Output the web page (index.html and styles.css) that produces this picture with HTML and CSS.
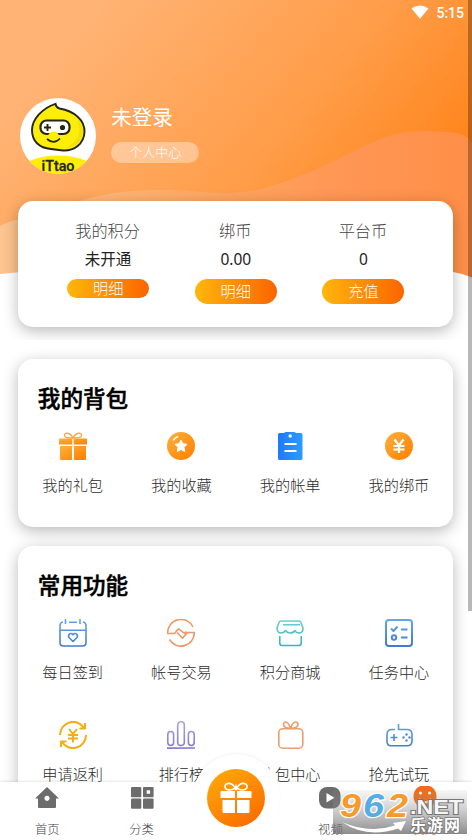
FILE: index.html
```html
<!DOCTYPE html>
<html lang="zh-CN">
<head>
<meta charset="utf-8">
<title>个人中心</title>
<link rel="stylesheet" href="styles.css">
</head>
<body>
<svg class="defs" aria-hidden="true">
  <defs>
    <linearGradient id="or" x1="0" y1="0" x2="1" y2="1"><stop offset="0" stop-color="#ffb13c"/><stop offset="1" stop-color="#ff7d00"/></linearGradient>
    <linearGradient id="bl" x1="0" y1="0" x2="1" y2="0"><stop offset="0" stop-color="#1f79ff"/><stop offset="1" stop-color="#2b9dff"/></linearGradient>
    <linearGradient id="lb" x1="0" y1="0" x2="0" y2="28" gradientUnits="userSpaceOnUse"><stop offset="0" stop-color="#65a7ea"/><stop offset="1" stop-color="#4278d0"/></linearGradient>
    <linearGradient id="te" x1="0" y1="0" x2="0" y2="28" gradientUnits="userSpaceOnUse"><stop offset="0" stop-color="#6dd0d6"/><stop offset="1" stop-color="#36b2b9"/></linearGradient>
    <linearGradient id="pu" x1="0" y1="0" x2="0" y2="28" gradientUnits="userSpaceOnUse"><stop offset="0" stop-color="#aaa4e8"/><stop offset="1" stop-color="#8178d4"/></linearGradient>
    <linearGradient id="wave" x1="0" y1="0" x2="1" y2="0"><stop offset="0" stop-color="#fdc591"/><stop offset=".35" stop-color="#ffad69"/><stop offset=".7" stop-color="#ff9755"/><stop offset="1" stop-color="#ff8f48"/></linearGradient>
  </defs>
</svg>
<div class="app">
  <header class="hero">
    <svg class="waves" viewBox="0 0 472 340">
      <path fill="url(#wave)" d="M0 226Q9 221 20 219C50 212 65 206 80 201C115 189 160 189 190 191C245 196 260 192 310 172C350 156 378 134 412 131.500Q430 130.500 448 132Q466 133 472 143V280H0Z"/>
      <path fill="#fff" d="M0 274Q236 250 453 272Q463 273.500 472 277.500V340H0Z"/>
    </svg>
    <div class="status">
      <svg width="18" height="14" viewBox="0 0 18 14"><path fill="#fff" d="M.5 3.500Q9-2.500 17.500 3.500L9 13.800Z"/></svg>
      <span>5:15</span>
    </div>
    <div class="profile">
      <svg class="avatar" viewBox="0 0 76 76">
        <defs><clipPath id="av"><circle cx="38" cy="38" r="38"/></clipPath></defs>
        <circle cx="38" cy="38" r="38" fill="#fff"/>
        <g clip-path="url(#av)">
          <ellipse cx="38" cy="77" rx="41" ry="19.500" fill="#fcee08"/>
          <path d="M35.500 5.800Q36 9.500 39.500 10.500C54 13 65 22 64.500 34C64 46 54 53 43 52.500Q37 51.800 31 51C19 50 12 43 12 32C12 22 22 10 35.500 5.800Z" fill="#fcee08" stroke="#27250d" stroke-width="1.900"/>
          <path d="M57 22Q65 40 46 50Q60 49 63 35Q63 26 57 22Z" fill="#f3df0b"/>
          <rect x="20.500" y="22.500" width="29" height="13.500" rx="6" fill="#fff" stroke="#27250d" stroke-width="2.200"/>
          <path d="M28 38Q29 33.500 34 33.500Q38 33.500 39 38Z" fill="#fcee08"/>
          <path d="M24 29.500h7M27.500 26v7" stroke="#27250d" stroke-width="1.900"/><circle cx="42.500" cy="29.500" r="2.600" fill="#27250d"/>
          <path d="M27 41Q34 47 40 40.500" fill="none" stroke="#27250d" stroke-width="1.700"/>
          <text class="brand" x="21.500" y="72.500" textLength="33" lengthAdjust="spacingAndGlyphs">iTtao</text>
        </g>
      </svg>
      <div class="who"><div class="name">未登录</div><div class="tag">个人中心</div></div>
    </div>
    <section class="card stats">
      <div class="stat"><div class="stat-title">我的积分</div><div class="stat-value">未开通</div><div class="btn short">明细</div></div>
      <div class="stat"><div class="stat-title">绑币</div><div class="stat-value">0.00</div><div class="btn">明细</div></div>
      <div class="stat"><div class="stat-title">平台币</div><div class="stat-value">0</div><div class="btn">充值</div></div>
    </section>
  </header>

  <section class="card bag">
    <h2>我的背包</h2>
    <div class="grid">
      <div class="item">
        <svg class="icon" viewBox="0 0 28 28"><g fill="url(#or)"><path d="M1 6.500H27Q28 6.500 28 7.500V12.500H15V6.500H13V12.500H0V7.500Q0 6.500 1 6.500Z"/><path d="M1 14H13V28H2Q1 28 1 27ZM15 14H27V27Q27 28 26 28H15Z"/></g><rect x="13" y="6.500" width="2" height="6" fill="#ffe2b5"/><path d="M14 6C11 0 5 0 5.500 4Q6 6 14 6Q22 6 22.500 4C23 0 17 0 14 6" fill="none" stroke="#ffa53a" stroke-width="1.300"/></svg>
        <span>我的礼包</span></div>
      <div class="item">
        <svg class="icon" viewBox="0 0 28 28"><circle cx="14" cy="14" r="14" fill="url(#or)"/><path d="M14 8l1.800 3.700 4.200.6-3 3 .7 4.200-3.700-2-3.700 2 .7-4.200-3-3 4.200-.6Z" fill="#fff" stroke="#fff" stroke-linejoin="round"/><path d="M6.500 8Q8 6 10.500 4.700" stroke="#fff" stroke-width="1.500" stroke-linecap="round" fill="none"/></svg>
        <span>我的收藏</span></div>
      <div class="item">
        <svg class="icon" viewBox="0 0 28 28"><path fill="url(#bl)" d="M3.500 1H8Q9 0 10 0H18Q19 0 20 1H25Q26.500 1 26.500 2.500V26.500Q26.500 28 25 28H3.500Q2 28 2 26.500V2.500Q2 1 3.500 1Z"/><circle cx="14.200" cy="4" r="1.700" fill="#fff"/><path d="M8.500 12h12M8.500 19h12" stroke="#fff" stroke-width="2.200"/></svg>
        <span>我的帐单</span></div>
      <div class="item">
        <svg class="icon" viewBox="0 0 28 28"><circle cx="14" cy="14" r="14" fill="url(#or)"/><path d="M9.500 7.500L14 13.500L18.500 7.500M8.500 14H19.500M8.500 17.500H19.500M14 13.500V21" fill="none" stroke="#fff" stroke-width="2.200"/></svg>
        <span>我的绑币</span></div>
    </div>
  </section>

  <section class="card tools">
    <h2>常用功能</h2>
    <div class="grid">
      <div class="item">
        <svg class="icon line" viewBox="0 0 28 28" stroke="url(#lb)"><path d="M4 3Q1 3.500 1 6.500V23.500Q1 27 4.500 27H23.500Q27 27 27 23.500V6.500Q27 3.500 24 3M10 3.300H18M6.500 0V5M21 0V5M1 11.200H27"/><path d="M14 22.500L10 18.500C8.500 16 12 12.500 14 15.800C16 12.500 19.500 16 18 18.500Z"/></svg>
        <span>每日签到</span></div>
      <div class="item">
        <svg class="icon line" viewBox="0 0 28 28" stroke="#ec9965"><path d="M26 8A13.300 13.300 0 0 0 .7 14.500H7.500L11.500 9.800L17.500 14.300L19.500 12.500M2.500 20.500A13.300 13.300 0 0 0 27.300 13.500H20.500L15.500 19.200L10 13.500"/></svg>
        <span>帐号交易</span></div>
      <div class="item">
        <svg class="icon line" viewBox="0 0 28 28" stroke="url(#te)"><path d="M5 2H23Q24.500 2 25 3.500L27 9Q27 14 23 14Q20 14 19 11.500Q17.500 14 14 14Q11 14 9.500 11.500Q8 14 5.500 14Q1 14 1 9L3 3.500Q3.500 2 5 2ZM7 5.800H24M3.800 17V24Q3.800 26.500 6 26.500H23Q25.200 26.500 25.200 24V17"/></svg>
        <span>积分商城</span></div>
      <div class="item">
        <svg class="icon line bold" viewBox="0 0 28 28" stroke="url(#lb)"><rect x="1" y="1" width="26" height="26" rx="3"/><path d="M6 9.500L8.500 12L12.500 7.500M16 10.500h6.500M16 18.500h6.500"/><circle cx="9" cy="18.500" r="2.200"/></svg>
        <span>任务中心</span></div>
      <div class="item">
        <svg class="icon line bold" viewBox="0 0 28 28" stroke="#f3ae16"><path d="M1 14A13 13 0 0 1 25 7M27 14A13 13 0 0 1 3 21M20.500 7.500H26V2M7.500 20.500H2V26M10 8L14 13L18 8M9 14H19M9 17.500H19M14 13V21.500"/></svg>
        <span>申请返利</span></div>
      <div class="item">
        <svg class="icon line" viewBox="0 0 28 28" stroke="url(#pu)"><rect x=".8" y="10.500" width="5.800" height="14" rx="2.900"/><rect x="10.700" y=".8" width="6.600" height="23.700" rx="3.300"/><rect x="21.400" y="10.500" width="5.800" height="14" rx="2.900"/><path d="M0 27.1L28 27"/></svg>
        <span>排行榜</span></div>
      <div class="item">
        <svg class="icon line" viewBox="0 0 28 28" stroke="#ee9d6d"><rect x="2.800" y="7.700" width="24" height="19.500" rx="4"/><path d="M14.500 7.500C12 -1 7 0 7.500 4Q8 7 14.500 7.500Q21.500 7 22 4C22.500 0 17 -1 14.500 7.500"/></svg>
        <span>礼包中心</span></div>
      <div class="item">
        <svg class="icon line" viewBox="0 0 28 28" stroke="url(#lb)"><path d="M10 8.500H7Q2 8.500 2 13.500V20Q2 24.800 6 24.800H22Q27 24.800 27 20V13.500Q27 8.500 22 8.500H13.500V3M5.500 16.500h7M9 13v7"/><g fill="#5087d6" stroke="none"><circle cx="21.500" cy="13.500" r="1.200"/><circle cx="21.500" cy="19.500" r="1.200"/><circle cx="18.500" cy="16.500" r="1.200"/><circle cx="24.500" cy="16.500" r="1.200"/></g></svg>
        <span>抢先试玩</span></div>
    </div>
  </section>

  <nav class="tabs">
    <div class="tab"><svg class="tab-icon" viewBox="0 0 24 24"><path fill="#6c6c6c" fill-rule="evenodd" d="M12 1L24 12.500H21V21Q21 22 20 22H4Q3 22 3 21V12.500H0ZM12 9.700a2.600 2.600 0 1 0 .01 0Z"/></svg><span>首页</span></div>
    <div class="tab"><svg class="tab-icon" viewBox="0 0 24 24"><g fill="#6c6c6c"><rect x="1" y="1" width="10.300" height="10.300" rx="1"/><rect x="13" y="1" width="10.600" height="10.300" rx="1"/><rect x="1" y="12.500" width="10.300" height="10.300" rx="1"/><rect x="13" y="12.500" width="10.600" height="10.300" rx="1"/></g><rect x="16.700" y="4.300" width="3.400" height="3.400" rx=".5" fill="#fff"/></svg><span>分类</span></div>
    <div class="tab"></div>
    <div class="tab"><svg class="tab-icon" viewBox="0 0 24 24"><rect x="1" y="1" width="21.500" height="21.500" rx="8" fill="#6c6c6c"/><path d="M8.500 7v9.500l8-4.800Z" fill="#fff"/></svg><span>视频</span></div>
    <div class="tab active"><svg class="tab-icon" viewBox="0 0 24 24"><circle cx="12" cy="10.500" r="11.500" fill="#f36b12"/><circle cx="7.500" cy="7" r="1.600" fill="#fff"/><circle cx="16.500" cy="7" r="1.600" fill="#fff"/><path d="M6 13Q12 20 18 13" fill="none" stroke="#fff" stroke-width="2"/></svg><span>我的</span></div>
    <div class="center-tab"><svg viewBox="0 0 58 58"><g fill="#fff"><path d="M14.500 22H28V29H13.500V23Q13.500 22 14.500 22ZM30 22H43.500Q44.500 22 44.500 23V29H30ZM15.500 31H28V44H16.500Q15.500 44 15.500 43ZM30 31H42.500V43Q42.500 44 41.500 44H30Z"/></g><path d="M29 21C26 12.500 18 13 18 17.500Q18 21 23 21Q28 20.500 29 17.500Q30 20.500 35 21Q40 21 40 17.500C40 13 32 12.500 29 21" fill="none" stroke="#fff" stroke-width="1.700"/></svg></div>
  </nav>

  <div class="scrollbar"></div>
  <svg class="watermark" viewBox="0 0 134 50">
    <defs><linearGradient id="wm" x1="0" y1="0" x2="0" y2="1"><stop offset="0" stop-color="#999" stop-opacity=".08"/><stop offset="1" stop-color="#6f6f6f" stop-opacity=".8"/></linearGradient></defs>
    <rect y="5" width="134" height="44" fill="url(#wm)"/>
    <path d="M9 37Q36 49 62 40.500L60 38L73 36L68 46L65 43.500Q34 54 9 37Z" fill="#fff"/>
    <g class="digits"><text x="7" y="32" fill="#f7992d" textLength="21" lengthAdjust="spacingAndGlyphs">9</text><text x="30" y="32" fill="#55ade3" textLength="21" lengthAdjust="spacingAndGlyphs">6</text><text x="54" y="32" fill="#f7992d" textLength="21" lengthAdjust="spacingAndGlyphs">2</text></g>
    <text class="net" x="77" y="29" textLength="53" lengthAdjust="spacingAndGlyphs">.NET</text>
    <text class="site" x="77" y="45.500" textLength="50">乐游网</text>
  </svg>
</div>
</body>
</html>
```
FILE: styles.css
```css
* { box-sizing: border-box; }
body {
  margin: 0;
  background: #fff;
  font-family: Roboto, "Noto Sans CJK SC", sans-serif;
  font-weight: 300;
  color: #2b2b2b;
}
.defs { position: absolute; width: 0; height: 0; }
.app { position: relative; width: 472px; height: 840px; overflow: hidden; }

.hero {
  position: relative;
  height: 340px;
  overflow: hidden;
  background: linear-gradient(130deg, #ffb374 14%, #ff9d49 52%, #ff8318 80%);
}
.waves { position: absolute; inset: 0; width: 472px; height: 340px; }
.status {
  position: relative;
  display: flex;
  justify-content: flex-end;
  gap: 7px;
  height: 98px;
  padding: 5px 8px 0 0;
  color: #fff;
  font: 500 14px/16px Roboto, sans-serif;
}
.profile { position: relative; display: flex; height: 103px; padding-left: 20.3px; gap: 15px; }
.avatar { width: 76px; height: 76px; }
.brand { font: 500 14px Roboto, sans-serif; fill: #27250d; stroke: #27250d; stroke-width: .3px; }
.name { margin-top: 6px; font-size: 20.5px; line-height: 28px; font-weight: 400; color: #fff; }
.tag {
  width: 88px;
  height: 21px;
  margin-top: 10px;
  border-radius: 11px;
  background: rgba(255, 255, 255, .36);
  color: #fff;
  font-size: 13px;
  line-height: 21px;
  text-align: center;
}

.card {
  position: relative;
  width: 435px;
  margin-left: 18.3px;
  border-radius: 15px;
  background: #fff;
  box-shadow: 0 4px 15px rgba(0, 0, 0, .28);
}
.stats { display: grid; grid-template-columns: repeat(3, 1fr); height: 126px; padding: 18px 26px 0; }
.stat { display: flex; flex-direction: column; align-items: center; }
.stat-title { position: relative; left: -.5px; font-size: 16.2px; line-height: 25px; color: #444; }
.stat-value {
  margin-top: 4px;
  font-family: "Noto Sans", "Noto Sans CJK SC", sans-serif;
  font-size: 15.5px;
  line-height: 23px;
  font-weight: 400;
  color: #222;
}
.btn {
  width: 82px;
  height: 25px;
  margin-top: 8px;
  border-radius: 13px;
  background: linear-gradient(90deg, #ffb60c, #fa6500);
  color: #fff;
  font-size: 15.2px;
  line-height: 26px;
  text-align: center;
}
.btn.short { height: 19px; line-height: 20px; }

.bag { height: 168px; margin-top: 19px; }
.tools { height: 300px; margin-top: 19px; }
h2 {
  margin: 0;
  padding: 23.5px 0 0 19.5px;
  font-size: 22.6px;
  line-height: 34px;
  font-weight: 500;
  color: #000;
  -webkit-text-stroke: .5px #000;
}
.grid { display: grid; grid-template-columns: repeat(4, 1fr); padding-top: 15.5px; row-gap: 37px; }
.item { display: flex; flex-direction: column; align-items: center; font-size: 15.2px; line-height: 22px; }
.icon { width: 28px; height: 28px; margin-bottom: 15px; }
.line { fill: none; stroke-width: 1.6; stroke-linecap: butt; stroke-linejoin: round; }
.bold { stroke-width: 2; }

.tabs {
  position: absolute;
  left: 0;
  right: 0;
  bottom: 0;
  display: grid;
  grid-template-columns: repeat(5, 1fr);
  height: 58px;
  background: #fff;
  box-shadow: 0 -1px 2px rgba(0, 0, 0, .1);
}
.tab { display: flex; flex-direction: column; align-items: center; padding-top: 4px; font-size: 12.3px; line-height: 18px; color: #444; }
.tab-icon { width: 24px; height: 24px; margin-bottom: 11px; }
.active { color: #f36b12; }
.center-tab {
  position: absolute;
  left: 192.5px;
  top: -28px;
  width: 87px;
  height: 87px;
  padding: 14.5px;
  border-radius: 50%;
  background: #fff;
  box-shadow: 0 -1px 2px rgba(0, 0, 0, .05);
}
.center-tab svg { display: block; width: 58px; height: 58px; border-radius: 50%; background: linear-gradient(145deg, #ffae09, #fb7000 85%); }
.scrollbar { position: absolute; top: 0; right: 0; width: 4px; height: 611px; background: rgba(0, 0, 0, .28); }
.watermark { position: absolute; left: 333px; top: 785px; width: 134px; height: 50px; }
.digits text { font: italic 700 34px "Liberation Sans", sans-serif; stroke: #fff; stroke-width: 2.4px; paint-order: stroke; }
.net { font: 700 20px "Liberation Sans", sans-serif; fill: #f6f6f6; stroke: #777; stroke-width: 2px; paint-order: stroke; }
.site { font: 700 16px "Noto Sans CJK SC", sans-serif; fill: #fff; stroke: #777; stroke-width: 1.5px; paint-order: stroke; }
```
